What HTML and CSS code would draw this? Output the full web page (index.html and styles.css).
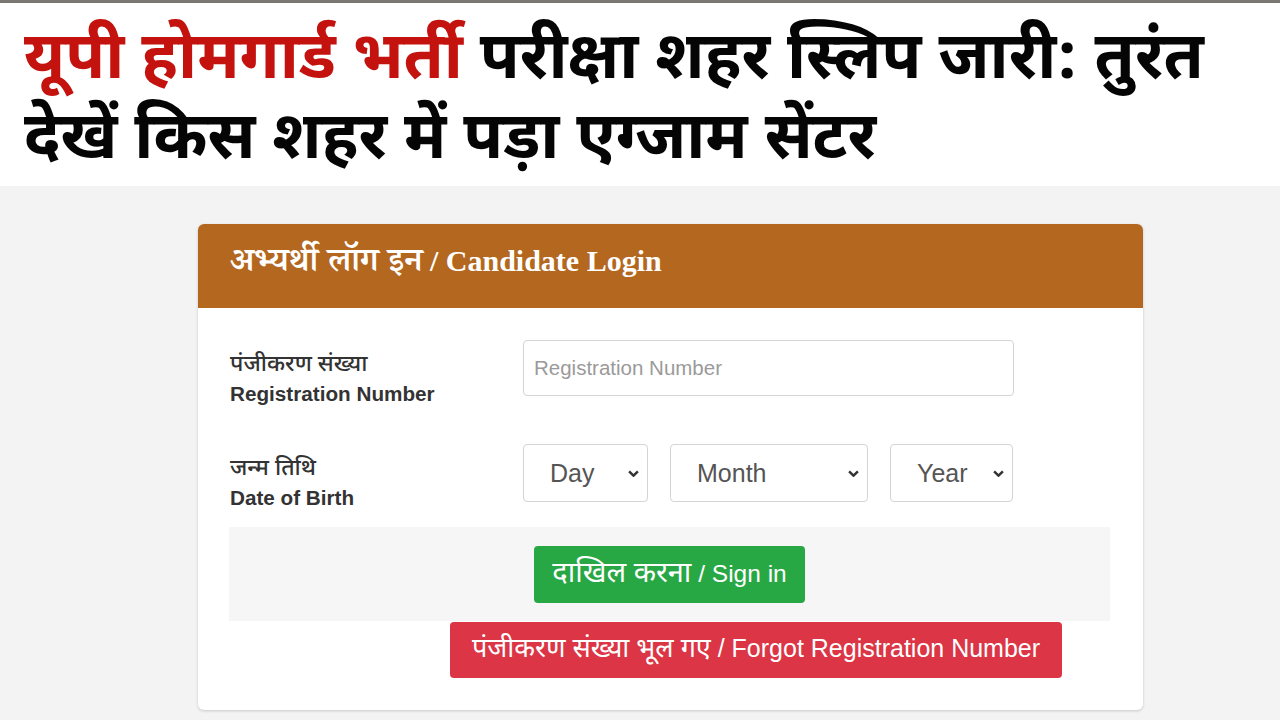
FILE: index.html
```html
<!DOCTYPE html>
<html lang="hi">
<head>
<meta charset="utf-8">
<title>UP Homeguard</title>
<link rel="stylesheet" href="styles.css">
</head>
<body>
<header class="headline">
  <h1><span class="red">यूपी होमगार्ड भर्ती</span> परीक्षा शहर स्लिप जारी: तुरंत<br>देखें किस शहर में पड़ा एग्जाम सेंटर</h1>
</header>
<main class="page">
  <section class="card">
    <div class="card-head"><span class="dv">अभ्यर्थी लॉग इन</span> / Candidate Login</div>
    <div class="card-body">
      <div class="row">
        <div class="label"><span class="hi">पंजीकरण संख्या</span><b>Registration Number</b></div>
        <div class="field"><input class="input" type="text" placeholder="Registration Number"></div>
      </div>
      <div class="row row-dob">
        <div class="label"><span class="hi">जन्म तिथि</span><b>Date of Birth</b></div>
        <div class="field selects">
          <div class="select s-day">Day<svg viewBox="0 0 10 6"><path d="M1 1l4 4 4-4" /></svg></div>
          <div class="select s-month">Month<svg viewBox="0 0 10 6"><path d="M1 1l4 4 4-4" /></svg></div>
          <div class="select s-year">Year<svg viewBox="0 0 10 6"><path d="M1 1l4 4 4-4" /></svg></div>
        </div>
      </div>
      <div class="actions">
        <button class="btn btn-green"><span class="dv">दाखिल करना</span> / Sign in</button>
      </div>
      <button class="btn btn-red"><span class="dv">पंजीकरण संख्या भूल गए</span> / Forgot Registration Number</button>
    </div>
  </section>
</main>
</body>
</html>
```
FILE: styles.css
```css
html, body {
  margin: 0;
  padding: 0;
}
body {
  width: 1280px;
  height: 720px;
  overflow: hidden;
  background: #f3f3f3;
  font-family: "Liberation Sans", "Noto Sans Devanagari", "Noto Sans", sans-serif;
}
.headline {
  background: #fff;
  border-top: 3px solid #7a7672;
  height: 186px;
  box-sizing: border-box;
  padding: 20px 0 0 24px;
}
.headline h1 {
  margin: 0;
  font-family: "Noto Sans Devanagari", "Noto Sans", sans-serif;
  font-weight: 700;
  font-size: 65px;
  line-height: 80px;
  color: #050505;
}
.red {
  color: #c4120e;
}
.page {
  padding: 38px 0 0 198px;
}
.card {
  width: 945px;
  background: #fff;
  border-radius: 6px;
  box-shadow: 0 1px 3px rgba(0,0,0,0.18);
  overflow: hidden;
}
.card-head {
  background: #b4671f;
  height: 84px;
  box-sizing: border-box;
  padding: 18px 32px 0;
  color: #fff;
  font-family: "Liberation Serif", "Noto Serif Devanagari", "Noto Sans Devanagari", serif;
  font-weight: 700;
  font-size: 30px;
  line-height: 38px;
}
.card-head .dv {
  font-family: "Noto Serif Devanagari", "Noto Sans Devanagari", serif;
  font-size: 34px;
  font-weight: 600;
}
.card-body {
  padding: 32px 33px 32px 31px;
}
.row {
  display: flex;
  height: 56px;
}
.row-dob {
  margin-top: 48px;
  height: 58px;
}
.label {
  width: 293px;
  padding-left: 1px;
  display: flex;
  flex-direction: column;
  color: #333;
  font-size: 20.7px;
  line-height: 30px;
  padding-top: 11px;
}
.label .hi {
  font-family: "Noto Sans Devanagari", "Liberation Serif", serif;
  font-size: 23px;
  line-height: 28px;
  font-weight: 500;
}
.label b {
  font-weight: 700;
}
.field {
  flex: none;
}
.input {
  width: 491px;
  height: 56px;
  box-sizing: border-box;
  border: 1px solid #d4d4d4;
  border-radius: 4px;
  padding: 0 10px;
  font-family: "Liberation Sans", sans-serif;
  font-size: 20.5px;
  color: #555;
  background: #fff;
  outline: none;
}
.input::placeholder {
  color: #9a9a9a;
}
.selects {
  display: flex;
  gap: 22px;
}
.select {
  height: 58px;
  box-sizing: border-box;
  border: 1px solid #d4d4d4;
  border-radius: 4px;
  display: flex;
  align-items: center;
  justify-content: space-between;
  padding: 0 8px 0 26px;
  font-size: 25px;
  color: #555;
  background: #fff;
}
.select svg {
  width: 11px;
  height: 7px;
  fill: none;
  stroke: #333;
  stroke-width: 2.2;
}
.s-day { width: 125px; }
.s-month { width: 198px; }
.s-year { width: 123px; }
.actions {
  margin-top: 25px;
  background: #f6f6f6;
  height: 94px;
  display: flex;
  justify-content: center;
  align-items: flex-start;
  padding-top: 19px;
  box-sizing: border-box;
}
.btn {
  border: 0;
  border-radius: 4px;
  color: #fff;
  font-family: "Liberation Sans", "Noto Sans Devanagari", sans-serif;
  font-size: 24.5px;
  height: 57px;
  padding: 0;
  display: block;
  white-space: nowrap;
}
.btn .dv {
  font-family: "Noto Sans Devanagari", sans-serif;
}
.btn-green {
  background: #28a745;
  width: 271px;
}
.btn-green .dv {
  font-size: 29px;
}
.btn-red {
  background: #dc3545;
  width: 612px;
  height: 56px;
  margin: 1px 0 0 221px;
  font-size: 25px;
}
.btn-red .dv {
  font-size: 27px;
}
```
